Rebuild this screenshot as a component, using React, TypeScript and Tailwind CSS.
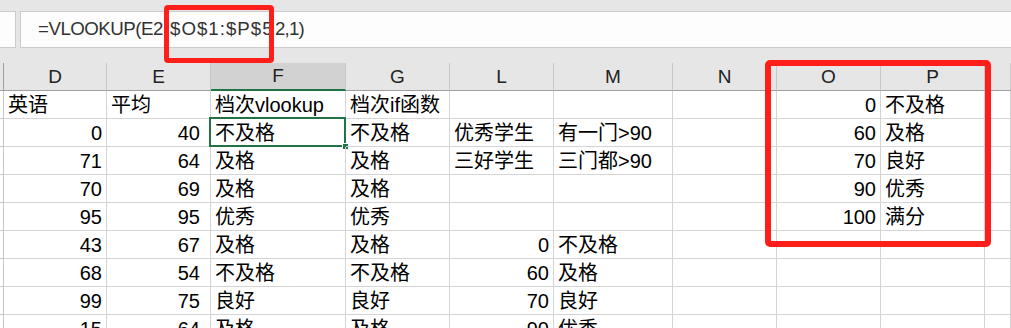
import React from "react";

type Align = "l" | "r";
type Cell = { t: string; a: Align } | null;

const L = (t: string): Cell => ({ t, a: "l" });
const R = (t: string): Cell => ({ t, a: "r" });

const widths = ["w-[103px]", "w-[104px]", "w-[135px]", "w-[104px]", "w-[104px]", "w-[119px]", "w-[104px]", "w-[104px]", "w-[104px]", "flex-1"];
const heads = ["D", "E", "F", "G", "L", "M", "N", "O", "P", ""];
const rightPad = ["pr-[4px]", "pr-[10px]", "pr-[4px]", "pr-[4px]", "pr-[4px]", "pr-[4px]", "pr-[4px]", "pr-[4px]", "pr-[4px]", "pr-[4px]"];

const rows: Cell[][] = [
  [L("英语"), L("平均"), L("档次vlookup"), L("档次if函数"), null, null, null, R("0"), L("不及格"), null],
  [R("0"), R("40"), L("不及格"), L("不及格"), L("优秀学生"), L("有一门>90"), null, R("60"), L("及格"), null],
  [R("71"), R("64"), L("及格"), L("及格"), L("三好学生"), L("三门都>90"), null, R("70"), L("良好"), null],
  [R("70"), R("69"), L("及格"), L("及格"), null, null, null, R("90"), L("优秀"), null],
  [R("95"), R("95"), L("优秀"), L("优秀"), null, null, null, R("100"), L("满分"), null],
  [R("43"), R("67"), L("及格"), L("及格"), R("0"), L("不及格"), null, null, null, null],
  [R("68"), R("54"), L("不及格"), L("不及格"), R("60"), L("及格"), null, null, null, null],
  [R("99"), R("75"), L("良好"), L("良好"), R("70"), L("良好"), null, null, null, null],
  [R("15"), R("64"), L("及格"), L("及格"), R("90"), L("优秀"), null, null, null, null],
];

export default function App() {
  return (
    <div
      className="relative w-[1011px] h-[328px] overflow-hidden bg-white text-black"
      style={{ fontFamily: '"Liberation Sans", "Noto Sans CJK SC", sans-serif' }}
    >
      {/* formula bar area */}
      <div className="h-[63px] bg-[#e6e6e6] pt-[11px] flex gap-[4px]">
        <div className="w-[16px] h-[37px] bg-[#fdfdfd] border border-l-0 border-[#cbcbcb]" />
        <div className="flex-1 h-[37px] bg-[#fdfdfd] border border-r-0 border-[#cbcbcb] flex items-center pl-[17px] text-[18.7px] text-[#333] leading-none whitespace-pre">
          <span className="w-[125px] shrink-0 tracking-[-0.5px]">=VLOOKUP(E2</span>
          <span className="w-[7px] shrink-0 overflow-hidden">,</span>
          <span className="w-[98px] shrink-0 tracking-[1px]">$O$1:$P$5</span>
          <span className="w-[7px] shrink-0 overflow-hidden">,</span>
          <span className="shrink-0 tracking-[-0.8px]">2,1)</span>
        </div>
      </div>

      {/* column header */}
      <div className="flex h-[28px]">
        <div className="w-[4px] bg-[#e6e6e6] border-r border-b border-[#9e9e9e]" />
        {heads.map((h, i) => (
          <div
            key={i}
            className={`${widths[i]} shrink-0 border-r border-[#c8c8c8] ${
              h === "F" ? "bg-[#d2d2d2] border-b-2 border-b-[#217346]" : "bg-[#e6e6e6] border-b border-b-[#9e9e9e]"
            } flex items-end justify-center pb-[2px] text-[19px] leading-[22px] text-[#222]`}
          >
            {h}
          </div>
        ))}
      </div>

      {/* rows */}
      {rows.map((r, ri) => (
        <div key={ri} className="flex h-[28px]">
          <div className="w-[4px] bg-white border-r border-b border-[#c6c6c6]" />
          {r.map((c, ci) => (
            <div
              key={ci}
              className={`${widths[ci]} shrink-0 relative border-r border-b border-[#d4d4d4] flex items-end pb-[1px] text-[20px] leading-[24px] whitespace-nowrap ${
                c && c.a === "r" ? `justify-end ${rightPad[ci]}` : "justify-start pl-[4px]"
              }`}
            >
              {c ? c.t : ""}
              {ri === 1 && ci === 2 && (
                <>
                  <div className="absolute -left-[2px] -top-[2px] -right-[1px] -bottom-[1px] border-2 border-[#217346]" />
                  <div className="absolute -right-[4px] -bottom-[4px] w-[7px] h-[7px] bg-[#217346] border border-white" />
                </>
              )}
            </div>
          ))}
        </div>
      ))}

      {/* red annotation boxes */}
      <div className="absolute left-[164px] top-[5px] w-[110px] h-[58px] border-[5px] border-[#ff1f1a] rounded-[4px]" />
      <div className="absolute left-[765px] top-[60px] w-[226px] h-[187px] border-[6px] border-[#ff1f1a] rounded-[5px]" />
    </div>
  );
}
